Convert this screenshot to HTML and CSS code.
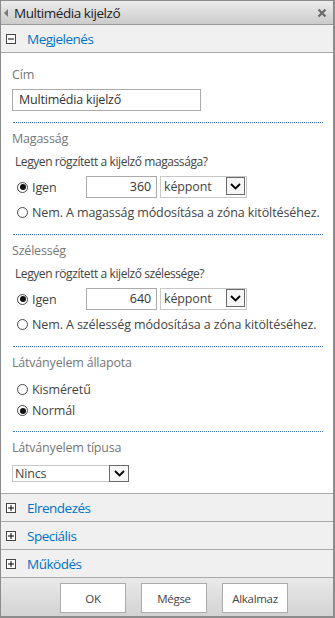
FILE: index.html
```html
<!DOCTYPE html>
<html lang="hu">
<head>
<meta charset="utf-8">
<title>Multimédia kijelző</title>
<link rel="stylesheet" href="styles.css">
</head>
<body>
<div class="panel">
  <div class="titlebar">
    <span class="tri"></span>
    <span class="title">Multimédia kijelző</span>
    <svg class="close" width="10" height="10" viewBox="0 0 10 10"><path d="M1.5 1.5 L8.5 8.5 M8.5 1.5 L1.5 8.5" stroke="#6a6a6a" stroke-width="2.2"/></svg>
  </div>
  <div class="sect">
    <span class="pm"><svg width="10" height="10" viewBox="0 0 10 10"><rect x="0.5" y="0.5" width="9" height="9" fill="#fff" stroke="#444"/><path d="M2 5 H8" stroke="#000"/></svg></span>
    <span class="sect-title">Megjelenés</span>
  </div>
  <div class="content">
    <div class="lbl first">Cím</div>
    <div class="textbox">Multimédia kijelző</div>
    <div class="sep"></div>

    <div class="lbl">Magasság</div>
    <div class="question">Legyen rögzített a kijelző magassága?</div>
    <div class="radio-row igen-row">
      <span class="radio on"></span><span class="rtext igen">Igen</span>
      <span class="numbox">360</span>
      <span class="select unit"><span class="sel-text">képpont</span><span class="sel-btn"><svg width="11" height="7" viewBox="0 0 11 7"><path d="M1 1 L5.5 5.5 L10 1" fill="none" stroke="#000" stroke-width="1.8"/></svg></span></span>
    </div>
    <div class="radio-row nem">
      <span class="radio"></span><span class="rtext">Nem. A magasság módosítása a zóna kitöltéséhez.</span>
    </div>
    <div class="sep"></div>

    <div class="lbl">Szélesség</div>
    <div class="question">Legyen rögzített a kijelző szélessége?</div>
    <div class="radio-row igen-row">
      <span class="radio on"></span><span class="rtext igen">Igen</span>
      <span class="numbox">640</span>
      <span class="select unit"><span class="sel-text">képpont</span><span class="sel-btn"><svg width="11" height="7" viewBox="0 0 11 7"><path d="M1 1 L5.5 5.5 L10 1" fill="none" stroke="#000" stroke-width="1.8"/></svg></span></span>
    </div>
    <div class="radio-row nem">
      <span class="radio"></span><span class="rtext">Nem. A szélesség módosítása a zóna kitöltéséhez.</span>
    </div>
    <div class="sep"></div>

    <div class="lbl">Látványelem állapota</div>
    <div class="radio-row state first-state">
      <span class="radio"></span><span class="rtext">Kisméretű</span>
    </div>
    <div class="radio-row state">
      <span class="radio on"></span><span class="rtext">Normál</span>
    </div>
    <div class="sep sep-short"></div>

    <div class="lbl">Látványelem típusa</div>
    <span class="select type"><span class="sel-text">Nincs</span><span class="sel-btn"><svg width="11" height="7" viewBox="0 0 11 7"><path d="M1 1 L5.5 5.5 L10 1" fill="none" stroke="#000" stroke-width="1.8"/></svg></span></span>
  </div>
  <div class="sect">
    <span class="pm"><svg width="10" height="10" viewBox="0 0 10 10"><rect x="0.5" y="0.5" width="9" height="9" fill="#fff" stroke="#444"/><path d="M2 5 H8 M5 2 V8" stroke="#000"/></svg></span>
    <span class="sect-title">Elrendezés</span>
  </div>
  <div class="sect">
    <span class="pm"><svg width="10" height="10" viewBox="0 0 10 10"><rect x="0.5" y="0.5" width="9" height="9" fill="#fff" stroke="#444"/><path d="M2 5 H8 M5 2 V8" stroke="#000"/></svg></span>
    <span class="sect-title">Speciális</span>
  </div>
  <div class="sect">
    <span class="pm"><svg width="10" height="10" viewBox="0 0 10 10"><rect x="0.5" y="0.5" width="9" height="9" fill="#fff" stroke="#444"/><path d="M2 5 H8 M5 2 V8" stroke="#000"/></svg></span>
    <span class="sect-title">Működés</span>
  </div>
  <div class="footer">
    <button class="btn">OK</button>
    <button class="btn">Mégse</button>
    <button class="btn">Alkalmaz</button>
  </div>
</div>
</body>
</html>
```

FILE: styles.css
```css
* { box-sizing: border-box; }
html, body { margin: 0; padding: 0; background: #fff; }
body { font-family: "Open Sans", "Noto Sans", sans-serif; font-size: 12.5px; color: #444; }

.panel {
  width: 335px;
  height: 618px;
  border: 1px solid #8c8c8c;
  border-right-width: 2px;
  border-bottom-width: 2px;
  display: flex;
  flex-direction: column;
  overflow: hidden;
}

.titlebar {
  height: 24px;
  flex: none;
  display: flex;
  align-items: center;
  background: linear-gradient(#ececec, #cbcbcb);
  border-bottom: 1px solid #9a9a9a;
  padding: 0 4px 0 3px;
}
.tri {
  width: 0; height: 0;
  border-top: 4px solid transparent;
  border-bottom: 4px solid transparent;
  border-right: 4px solid #7a7a7a;
  margin-right: 6px;
  margin-top: 1px;
}
.title { font-size: 13.5px; color: #222; flex: 1; letter-spacing: -0.45px; }
.close { margin-right: 2px; }

.sect {
  height: 28px;
  flex: none;
  display: flex;
  align-items: center;
  background: #f0f0f0;
  border-bottom: 1px solid #a8a8a8;
  padding-left: 5px;
}
.pm { width: 10px; height: 10px; display: block; margin-right: 11px; }
.pm svg { display: block; }
.sect-title { color: #0072c6; font-size: 13.5px; letter-spacing: -0.5px; }

.content {
  flex: 1;
  background: #fff;
  border-bottom: 1px solid #a8a8a8;
  padding: 0 10px 0 11px;
}

.lbl { color: #777; font-size: 12.5px; line-height: 16px; height: 16px; margin-top: 8px; letter-spacing: -0.2px; }
.lbl.first { margin-top: 14px; }

.textbox {
  width: 189px; height: 22px;
  margin-top: 6px;
  border: 1px solid #ababab;
  color: #333;
  font-size: 12.5px;
  line-height: 20px;
  padding-left: 6px;
  letter-spacing: -0.2px;
}

.sep { height: 0; border-top: 1px dotted #3b6fc2; margin-top: 11px; margin-left: 1px; }
.sep.sep-short { margin-top: 10px; }

.question { color: #444; font-size: 12px; line-height: 16px; margin-top: 7px; padding-left: 3px; letter-spacing: -0.42px; }

.radio-row { display: flex; align-items: center; height: 22px; padding-left: 5px; }
.radio-row.igen-row { margin-top: 6px; }
.radio-row.nem { margin-top: 3px; }
.radio {
  width: 11px; height: 11px;
  border: 1px solid #4a4a4a;
  border-radius: 50%;
  background: #fff;
  flex: none;
  display: flex; align-items: center; justify-content: center;
}
.radio.on::after { content: ""; width: 6px; height: 6px; border-radius: 50%; background: #111; }
.rtext { margin-left: 4px; color: #444; font-size: 12.5px; letter-spacing: -0.1px; white-space: nowrap; }
.rtext.igen { width: 54px; }

.numbox {
  width: 71px; height: 22px;
  border: 1px solid #ababab;
  text-align: right;
  padding-right: 5px;
  line-height: 20px;
  font-size: 12.5px;
  color: #333;
  letter-spacing: -0.1px;
}

.select {
  display: flex; align-items: center;
  height: 22px;
  border: 1px solid #c8c8c8;
  background: #fff;
  color: #444;
  font-size: 12.5px;
  letter-spacing: -0.15px;
  padding-left: 3px;
  padding-right: 1px;
}
.select.unit { width: 87px; margin-left: 3px; align-items: flex-start; }
.select.unit .sel-text { line-height: 20px; }
.sel-text { flex: 1; }
.sel-btn {
  width: 19px; height: 18px;
  border: 1px solid #6a6a6a;
  background: #f6f6f6;
  display: flex; align-items: center; justify-content: center;
}
.sel-btn svg { display: block; }

.radio-row.state { height: 21px; margin-top: 0; }
.radio-row.first-state { margin-top: 8px; }

.select.type {
  width: 117px; height: 17px;
  margin-top: 9px;
  padding-right: 0; padding-left: 2px;
  border-right: none;
}
.select.type .sel-btn { height: 17px; width: 20px; border-color: #6a6a6a; }

.footer {
  height: 38px;
  flex: none;
  background: linear-gradient(#e9e9e9, #d3d3d3);
  display: flex;
  align-items: flex-start;
  gap: 15px;
  padding-top: 5px;
  padding-left: 59px;
}
.btn {
  width: 66px; height: 30px;
  background: #fff;
  border: 1px solid #ababab;
  font-family: "Open Sans", "Noto Sans", sans-serif;
  font-size: 11.5px;
  color: #444;
  padding: 0;
  letter-spacing: -0.3px;
}
```
